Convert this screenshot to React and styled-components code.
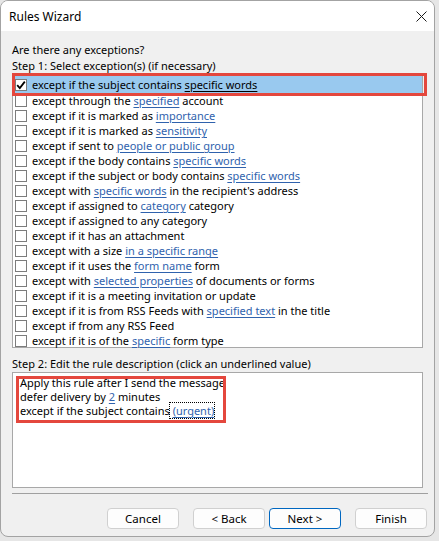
import React from "react";
import styled, { createGlobalStyle } from "styled-components";

const exceptions = [
  "except if the subject contains [specific words]",
  "except through the [specified] account",
  "except if it is marked as [importance]",
  "except if it is marked as [sensitivity]",
  "except if sent to [people or public group]",
  "except if the body contains [specific words]",
  "except if the subject or body contains [specific words]",
  "except with [specific words] in the recipient's address",
  "except if assigned to [category] category",
  "except if assigned to any category",
  "except if it has an attachment",
  "except with a size [in a specific range]",
  "except if it uses the [form name] form",
  "except with [selected properties] of documents or forms",
  "except if it is a meeting invitation or update",
  "except if it is from RSS Feeds with [specified text] in the title",
  "except if from any RSS Feed",
  "except if it is of the [specific] form type",
];

// split "text [link] text" into parts
const renderParts = (line, selected) =>
  line.split(/(\[[^\]]+\])/).map((part, i) =>
    part.startsWith("[") ? (
      <Link key={i} $selected={selected}>
        {part.slice(1, -1)}
      </Link>
    ) : (
      <React.Fragment key={i}>{part}</React.Fragment>
    )
  );

const App = () => {
  return (
    <>
      <GlobalStyle />
      <Dialog>
        <TitleBar>
          <span>Rules Wizard</span>
          <CloseButton>
            <svg width="11" height="11" viewBox="0 0 11 11">
              <path d="M0.5 0.5 L10.5 10.5 M10.5 0.5 L0.5 10.5" stroke="#1a1a1a" strokeWidth="1" fill="none" />
            </svg>
          </CloseButton>
        </TitleBar>
        <Body>
          <Label $top={11}>Are there any exceptions?</Label>
          <Label>Step 1: Select exception(s) (if necessary)</Label>
          <ListBox>
            {exceptions.map((line, i) => (
              <Row key={i} $selected={i === 0}>
                <CheckBox>
                  {i === 0 && (
                    <svg width="10" height="10" viewBox="0 0 10 10">
                      <path d="M1.2 5.2 L3.8 8 L8.8 1.6" stroke="#000" strokeWidth="1.8" fill="none" />
                    </svg>
                  )}
                </CheckBox>
                <RowText>{renderParts(line, i === 0)}</RowText>
              </Row>
            ))}
            <Callout $left={-1} $top={-2} $width={415} $height={23} />
          </ListBox>
          <Label $top={8}>Step 2: Edit the rule description (click an underlined value)</Label>
          <DescBox>
            <DescLine>Apply this rule after I send the message</DescLine>
            <DescLine>
              defer delivery by <Link>2</Link> minutes
            </DescLine>
            <DescLine>
              except if the subject contains<Focus> <Link>(urgent)</Link></Focus>
            </DescLine>
            <Callout $left={3} $top={3} $width={210} $height={47} />
          </DescBox>
          <Separator />
          <Buttons>
            <Button>Cancel</Button>
            <Pair>
              <Button>&lt; Back</Button>
              <Button $primary>Next &gt;</Button>
            </Pair>
            <Button>Finish</Button>
          </Buttons>
        </Body>
      </Dialog>
    </>
  );
};

const GlobalStyle = createGlobalStyle`
  body {
    margin: 0;
    background: #e6e6e6;
    font-family: "Segoe UI", "Noto Sans", sans-serif;
    font-size: 11px;
    color: #000;
  }
`;

const Dialog = styled.div`
  width: 435px;
  height: 537px;
  box-sizing: border-box;
  border: 1px solid #a3a3a3;
  border-radius: 8px;
  overflow: hidden;
  background: #f0f0f0;
  display: flex;
  flex-direction: column;
`;

const TitleBar = styled.div`
  height: 30px;
  flex: none;
  background: #fff;
  display: flex;
  align-items: center;
  justify-content: space-between;
  padding: 0 6px 0 8px;
  font-size: 12px;
`;

const CloseButton = styled.div`
  display: flex;
  align-items: center;
  width: 12px;
`;

const Body = styled.div`
  padding: 0 7px 0 11px;
  display: flex;
  flex-direction: column;
`;

const Label = styled.div`
  margin-top: ${(p) => p.$top || 0}px;
  height: 16px;
  line-height: 16px;
  white-space: nowrap;
`;

const ListBox = styled.div`
  position: relative;
  width: 411px;
  height: 274px;
  box-sizing: border-box;
  border: 1px solid #a8a8a8;
  background: #fff;
  padding-top: 1px;
`;

const Row = styled.div`
  display: flex;
  align-items: center;
  height: ${(p) => (p.$selected ? 17 : 15)}px;
  background: ${(p) => (p.$selected ? "#99c9ef" : "transparent")};
  padding-left: 2px;
  gap: 5px;
  white-space: nowrap;
`;

const CheckBox = styled.span`
  width: 12px;
  height: 12px;
  box-sizing: border-box;
  border: 1px solid #7c7c7c;
  background: #fff;
  flex: none;
  display: flex;
  align-items: center;
  justify-content: center;
`;

const RowText = styled.span`
  line-height: 15px;
`;

const Link = styled.span`
  color: ${(p) => (p.$selected ? "#000" : "#2f62ad")};
  text-decoration: underline;
  text-underline-offset: 2px;
`;

const Callout = styled.div`
  position: absolute;
  left: ${(p) => p.$left}px;
  top: ${(p) => p.$top}px;
  width: ${(p) => p.$width}px;
  height: ${(p) => p.$height}px;
  box-sizing: border-box;
  border: 3px solid #e4473d;
  pointer-events: none;
`;

const DescBox = styled.div`
  position: relative;
  width: 411px;
  height: 116px;
  box-sizing: border-box;
  border: 1px solid #a8a8a8;
  background: #fff;
  padding: 3px 7px;
`;

const DescLine = styled.div`
  line-height: 14px;
  white-space: nowrap;
`;

const Focus = styled.span`
  outline: 1px dotted #000;
  outline-offset: 0;
`;

const Separator = styled.div`
  margin-top: 5px;
  width: 416px;
  height: 1px;
  background: #a0a0a0;
`;

const Buttons = styled.div`
  margin-top: 14px;
  display: flex;
  justify-content: flex-end;
  gap: 14px;
  width: 415px;
`;

const Pair = styled.div`
  display: flex;
  gap: 4px;
`;

const Button = styled.div`
  width: 72px;
  height: 21px;
  box-sizing: border-box;
  border: 1px solid ${(p) => (p.$primary ? "#0067c0" : "#d0d0d0")};
  border-radius: 4px;
  background: #fdfdfd;
  display: flex;
  align-items: center;
  justify-content: center;
  font-size: 11.5px;
`;

export default App;
